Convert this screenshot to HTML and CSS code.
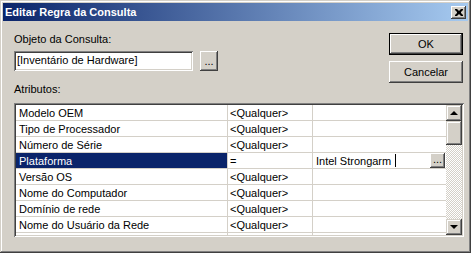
FILE: index.html
```html
<!DOCTYPE html>
<html lang="pt">
<head>
  <meta charset="UTF-8" />
  <title>Editar Regra da Consulta</title>
  <link rel="stylesheet" href="styles.css">
</head>
<body>

<div class="window">
  <div class="titlebar">
    <span class="title">Editar Regra da Consulta</span>
    <div class="close-btn">
      <svg width="8" height="7" viewBox="0 0 8 7">
        <path d="M0 0h2l2 2 2-2h2v1l-2 2v1l2 2v1h-2l-2-2-2 2h-2v-1l2-2v-1l-2-2z" fill="#000"/>
      </svg>
    </div>
  </div>

  <div class="content">
    <div class="top-row">
      <div class="query-object">
        <div class="label">Objeto da Consulta:</div>
        <div class="field-row">
          <div class="textbox">[Inventário de Hardware]</div>
          <div class="btn btn-browse">...</div>
        </div>
      </div>
      <div class="actions">
        <div class="btn btn-default">OK</div>
        <div class="btn">Cancelar</div>
      </div>
    </div>

    <div class="label label-attrs">Atributos:</div>

    <div class="grid">
      <div class="rows">
        <div class="row"><div class="cell c-name">Modelo OEM</div><div class="cell c-op">&lt;Qualquer&gt;</div><div class="cell c-val"></div></div>
        <div class="row"><div class="cell c-name">Tipo de Processador</div><div class="cell c-op">&lt;Qualquer&gt;</div><div class="cell c-val"></div></div>
        <div class="row"><div class="cell c-name">Número de Série</div><div class="cell c-op">&lt;Qualquer&gt;</div><div class="cell c-val"></div></div>
        <div class="row"><div class="cell c-name selected">Plataforma</div><div class="cell c-op">=</div><div class="cell c-val editing">Intel Strongarm<span class="caret"></span><div class="btn btn-cell">...</div></div></div>
        <div class="row"><div class="cell c-name">Versão OS</div><div class="cell c-op">&lt;Qualquer&gt;</div><div class="cell c-val"></div></div>
        <div class="row"><div class="cell c-name">Nome do Computador</div><div class="cell c-op">&lt;Qualquer&gt;</div><div class="cell c-val"></div></div>
        <div class="row"><div class="cell c-name">Domínio de rede</div><div class="cell c-op">&lt;Qualquer&gt;</div><div class="cell c-val"></div></div>
        <div class="row"><div class="cell c-name">Nome do Usuário da Rede</div><div class="cell c-op">&lt;Qualquer&gt;</div><div class="cell c-val"></div></div>
        <div class="row"><div class="cell c-name"></div><div class="cell c-op"></div><div class="cell c-val"></div></div>
      </div>
      <div class="scrollbar">
        <div class="sb-btn"><span class="arrow-up"></span></div>
        <div class="sb-thumb"></div>
        <div class="sb-track"></div>
        <div class="sb-btn"><span class="arrow-down"></span></div>
      </div>
    </div>
  </div>
</div>

</body>
</html>
```

FILE: styles.css
```css
body {
  margin: 0;
  font-family: 'Liberation Sans', Arial, sans-serif;
  font-size: 11px;
  color: #000;
  background: #d4d0c8;
}
.window {
  width: 471px;
  height: 253px;
  box-sizing: border-box;
  padding: 3px;
  background: #d4d0c8;
  box-shadow: inset -1px -1px #404040, inset 1px 1px #d4d0c8,
              inset -2px -2px #808080, inset 2px 2px #fff;
}
.titlebar {
  height: 18px;
  display: flex;
  align-items: center;
  padding: 0 2px;
  background: linear-gradient(to right, #0a246a, #a6caf0);
}
.title {
  color: #fff;
  font-weight: bold;
  font-size: 11px;
  line-height: 18px;
}
.close-btn {
  margin-left: auto;
  width: 15px;
  height: 13px;
  display: flex;
  align-items: center;
  justify-content: center;
  background: #d4d0c8;
  box-shadow: inset -1px -1px #404040, inset 1px 1px #fff,
              inset -2px -2px #808080;
}
.content {
  padding: 12px 5px 0 11px;
}
.top-row {
  display: flex;
  justify-content: space-between;
}
.label {
  line-height: 13px;
}
.field-row {
  display: flex;
  gap: 7px;
  margin-top: 5px;
}
.textbox {
  width: 179px;
  height: 20px;
  box-sizing: border-box;
  padding-left: 3px;
  line-height: 18px;
  background: #fff;
  white-space: nowrap;
  box-shadow: inset 1px 1px #808080, inset -1px -1px #fff,
              inset 2px 2px #404040, inset -2px -2px #d4d0c8;
}
.btn {
  background: #d4d0c8;
  box-sizing: border-box;
  text-align: center;
  box-shadow: inset -1px -1px #404040, inset 1px 1px #fff,
              inset -2px -2px #808080, inset 2px 2px #d4d0c8;
}
.btn-browse {
  width: 18px;
  height: 20px;
  line-height: 20px;
}
.actions {
  display: flex;
  flex-direction: column;
  gap: 6px;
}
.actions .btn {
  width: 74px;
  height: 22px;
  line-height: 22px;
}
.actions .btn-default {
  border: 1px solid #000;
  line-height: 20px;
  box-shadow: inset -1px -1px #404040, inset 1px 1px #fff,
              inset -2px -2px #808080;
}
.label-attrs {
  margin-top: 0;
}
.grid {
  display: flex;
  height: 134px;
  margin: 7px -1px 0 0;
  padding: 2px;
  box-sizing: border-box;
  overflow: hidden;
  box-shadow: inset 1px 1px #808080, inset -1px -1px #fff,
              inset 2px 2px #404040, inset -2px -2px #d4d0c8;
}
.rows {
  flex: 1;
  overflow: hidden;
  background: #fff;
}
.row {
  display: flex;
  height: 16px;
  box-sizing: border-box;
  border-bottom: 1px solid #d4d0c8;
}
.cell {
  padding-top: 1px;
  line-height: 14px;
  white-space: nowrap;
  overflow: hidden;
  box-sizing: border-box;
}
.c-name {
  width: 212px;
  padding-left: 3px;
  border-right: 1px solid #d4d0c8;
}
.c-op {
  width: 85px;
  padding-left: 2px;
  border-right: 1px solid #d4d0c8;
}
.c-val {
  flex: 1;
  padding-left: 3px;
}
.selected {
  background: #0a246a;
  color: #fff;
}
.editing {
  display: flex;
  align-items: center;
  padding-top: 0;
  padding-right: 1px;
}
.caret {
  display: inline-block;
  width: 1px;
  height: 13px;
  margin-left: 4px;
  background: #000;
}
.btn-cell {
  margin-left: auto;
  width: 15px;
  height: 15px;
  line-height: 13px;
}
.scrollbar {
  width: 16px;
  display: flex;
  flex-direction: column;
}
.sb-btn, .sb-thumb {
  background: #d4d0c8;
  box-shadow: inset -1px -1px #404040, inset 1px 1px #d4d0c8,
              inset -2px -2px #808080, inset 2px 2px #fff;
}
.sb-btn {
  height: 16px;
  display: flex;
  align-items: center;
  justify-content: center;
}
.sb-thumb {
  height: 24px;
}
.sb-track {
  flex: 1;
  background: repeating-conic-gradient(#fff 0 25%, #d4d0c8 0 50%) 0 0 / 2px 2px;
}
.arrow-up, .arrow-down {
  width: 0;
  height: 0;
  border-left: 4px solid transparent;
  border-right: 4px solid transparent;
}
.arrow-up {
  border-bottom: 4px solid #000;
}
.arrow-down {
  border-top: 4px solid #000;
}
```
